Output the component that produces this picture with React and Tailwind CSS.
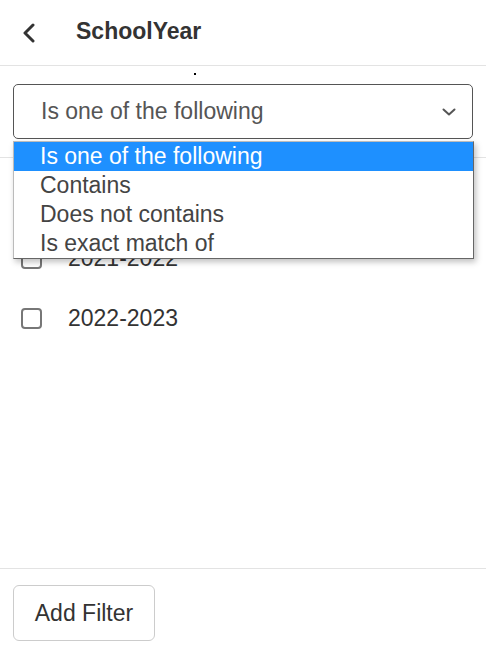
import { useState } from 'react';

const options = ['Is one of the following', 'Contains', 'Does not contains', 'Is exact match of'];
const years = ['2021-2022', '2022-2023'];

export default function App() {
  const [selected, setSelected] = useState(0);
  const [checked, setChecked] = useState({});

  return (
    <div className="relative w-[486px] h-[648px] bg-white flex flex-col text-[#333] font-[family-name:'Liberation_Sans',Arial,sans-serif]">
      {/* header */}
      <div className="h-[66px] shrink-0 flex items-center border-b border-[#e3e3e3]">
        <svg className="ml-[21px] w-[16px] h-[20px]" viewBox="0 0 16 20" fill="none">
          <path d="M12 2 L4 10 L12 18" stroke="#333" strokeWidth="3" strokeLinecap="round" strokeLinejoin="round" />
        </svg>
        <h1 className="ml-[39px] text-[23px] font-bold text-[#333] mt-[-2px]">SchoolYear</h1>
      </div>

      {/* condition select */}
      <div className="shrink-0 px-[13px] pt-[18px] pb-[18px] border-b border-[#e3e3e3]">
        <div className="h-[55px] flex items-center justify-between border border-[#555] rounded-[5px] pl-[27px] pr-[16px]">
          <span className="text-[23px] text-[#555]">{options[selected]}</span>
          <svg className="w-[14px] h-[10px]" viewBox="0 0 14 10" fill="none">
            <path d="M1.5 2.5 L7 7.5 L12.5 2.5" stroke="#555" strokeWidth="2" strokeLinecap="round" strokeLinejoin="round" />
          </svg>
        </div>
      </div>

      {/* values */}
      <div className="flex-1 flex flex-col pt-[85px] gap-[30px]">
        {years.map((y) => (
          <label key={y} className="flex items-center h-[30px]">
            <input
              type="checkbox"
              checked={!!checked[y]}
              onChange={() => setChecked({ ...checked, [y]: !checked[y] })}
              className="appearance-none ml-[21px] w-[21px] h-[21px] border-2 border-[#777] rounded-[4px] bg-white"
            />
            <span className="ml-[26px] text-[23px] text-[#333]">{y}</span>
          </label>
        ))}
      </div>

      {/* footer */}
      <div className="h-[80px] shrink-0 border-t border-[#e3e3e3] px-[13px] pt-[16px]">
        <button className="h-[56px] w-[142px] border border-[#ccc] rounded-[6px] text-[23px] text-[#333] bg-white">
          Add Filter
        </button>
      </div>

      {/* open dropdown list */}
      <ul className="absolute left-[13px] top-[141px] w-[461px] bg-white border border-[#bbb] border-r-[#666] border-b-[#666] shadow-[2px_3px_6px_rgba(0,0,0,0.25)]">
        {options.map((o, i) => (
          <li
            key={o}
            onClick={() => setSelected(i)}
            className={`h-[29px] flex items-center pl-[26px] text-[23px] leading-none ${i === selected ? 'bg-[#1e90ff] text-white' : 'text-[#444]'}`}
          >
            {o}
          </li>
        ))}
      </ul>

      <div className="absolute left-[194px] top-[73px] w-[2px] h-[2px] bg-black" />
    </div>
  );
}
